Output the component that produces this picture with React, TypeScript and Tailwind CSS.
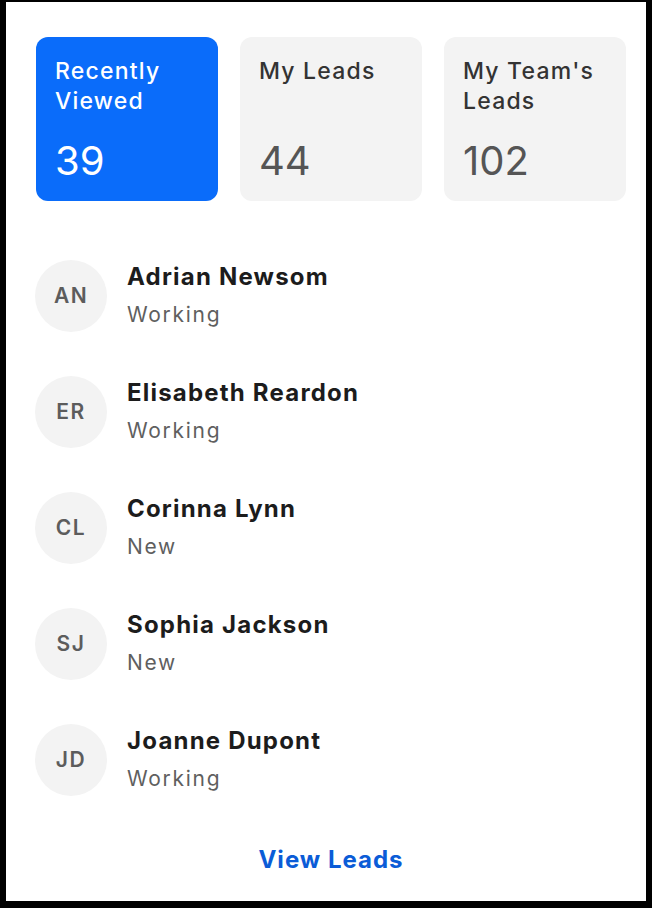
import React from "react";

const tabs = [
  { label: "Recently Viewed", count: 39, active: true },
  { label: "My Leads", count: 44, active: false },
  { label: "My Team's Leads", count: 102, active: false },
];

const leads = [
  { initials: "AN", name: "Adrian Newsom", status: "Working" },
  { initials: "ER", name: "Elisabeth Reardon", status: "Working" },
  { initials: "CL", name: "Corinna Lynn", status: "New" },
  { initials: "SJ", name: "Sophia Jackson", status: "New" },
  { initials: "JD", name: "Joanne Dupont", status: "Working" },
];

export default function App() {
  return (
    <div className="w-[652px] h-[908px] bg-black pt-[2px] pl-[6px] font-['Inter',sans-serif]">
      <div className="w-[640px] h-[899px] bg-white flex flex-col pl-[30px] pr-[20px] pt-[35px]">
        <div className="grid grid-cols-3 gap-[22px]">
          {tabs.map((t) => (
            <div
              key={t.label}
              className={
                t.active
                  ? "h-[164px] rounded-[12px] bg-[#0a6cfa] text-white px-[19px] pt-[19px] flex flex-col"
                  : "h-[164px] rounded-[12px] bg-[#f3f3f3] text-[#333] px-[19px] pt-[19px] flex flex-col"
              }
            >
              <div className="text-[23px] leading-[30px] font-medium tracking-[1.2px] h-[60px]">{t.label}</div>
              <div
                className={
                  t.active
                    ? "mt-[23px] text-[40px] leading-[44px] font-normal text-white"
                    : "mt-[23px] text-[40px] leading-[44px] font-normal text-[#555]"
                }
              >
                {t.count}
              </div>
            </div>
          ))}
        </div>

        <div className="flex flex-col gap-[44px] mt-[59px]">
          {leads.map((l) => (
            <div key={l.name} className="flex items-center gap-[20px] -ml-[1px]">
              <div className="w-[72px] h-[72px] rounded-full bg-[#f3f3f3] flex items-center justify-center text-[21px] font-semibold tracking-[1.5px] text-[#5c5c5c]">
                {l.initials}
              </div>
              <div className="flex flex-col gap-[8px]">
                <div className="text-[24px] leading-[30px] font-bold tracking-[1.2px] text-[#1c1c1c]">{l.name}</div>
                <div className="text-[21px] leading-[30px] tracking-[1.7px] text-[#5f5f5f]">{l.status}</div>
              </div>
            </div>
          ))}
        </div>

        <div className="mt-[46px] text-center text-[24px] font-bold tracking-[1px] text-[#0b5cd7]">View Leads</div>
      </div>
    </div>
  );
}
